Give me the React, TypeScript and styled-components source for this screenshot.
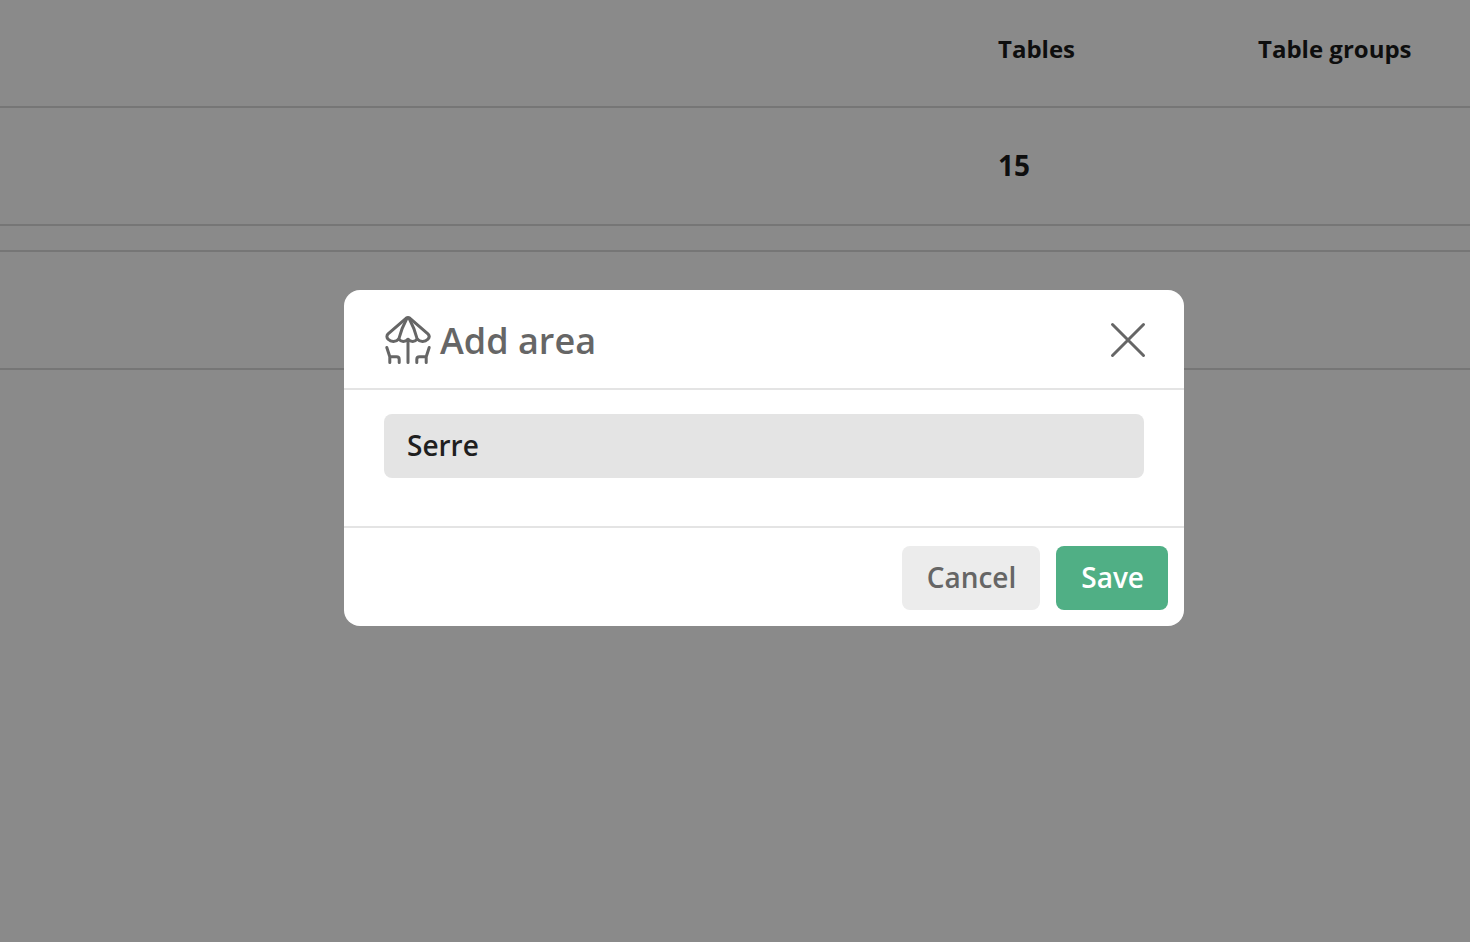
import React, { useState } from "react";
import styled, { createGlobalStyle } from "styled-components";

const GlobalStyle = createGlobalStyle`
  *, *::before, *::after { box-sizing: border-box; }
  body {
    margin: 0;
    background: #fcfcfc;
    color: #1b1b1b;
    font-family: "Open Sans", "Noto Sans", sans-serif;
  }
`;

const Page = styled.main`
  min-height: 100vh;
`;

const AreaTable = styled.table`
  width: 100%;
  table-layout: fixed;
  border-collapse: separate;
  border-spacing: 0;
  text-align: left;
`;

const Column = styled.col<{ $width?: number }>`
  width: ${({ $width }) => ($width ? `${$width}px` : "auto")};
`;

const HeadCell = styled.th`
  height: 106px;
  padding: 0 0 8px;
  font-size: 24px;
  line-height: 32px;
  font-weight: 700;
`;

const Cell = styled.td`
  height: 120px;
  padding: 0 0 2px;
  border-top: 2px solid #d7d7d7;
  border-bottom: 2px solid #d7d7d7;
  font-size: 28px;
  line-height: 40px;
  font-weight: 700;
`;

const SpacerCell = styled.td`
  height: 24px;
  padding: 0;
`;

const Overlay = styled.div`
  position: fixed;
  inset: 0;
  display: flex;
  align-items: center;
  justify-content: center;
  padding: 0 0 26px 58px;
  background: rgba(0, 0, 0, 0.45);
`;

const Dialog = styled.form`
  width: 840px;
  max-width: 100%;
  border-radius: 16px;
  background: #fff;
  color: #666;
`;

const DialogHeader = styled.header`
  display: flex;
  align-items: flex-start;
  gap: 8px;
  padding: 26px 32px 22px 40px;
  border-bottom: 2px solid #e4e4e4;
`;

const Title = styled.h2`
  flex: 1;
  margin: 0;
  font-size: 36px;
  line-height: 50px;
  font-weight: 600;
`;

const CloseButton = styled.button`
  display: flex;
  padding: 0;
  border: 0;
  background: none;
  color: inherit;
  cursor: pointer;
`;

const DialogBody = styled.div`
  padding: 24px 40px 48px;
`;

const NameInput = styled.input`
  display: block;
  width: 100%;
  height: 64px;
  padding: 0 23px 2px;
  border: 0;
  border-radius: 8px;
  outline: 0;
  background: #e4e4e4;
  color: #1f1f1f;
  font-family: inherit;
  font-size: 28px;
  font-weight: 600;
`;

const DialogFooter = styled.footer`
  display: flex;
  justify-content: flex-end;
  gap: 16px;
  padding: 18px 16px 16px;
  border-top: 2px solid #e4e4e4;
`;

const Button = styled.button<{ $primary?: boolean }>`
  height: 64px;
  padding: 0 24px 2px 25px;
  border: 0;
  border-radius: 8px;
  background: ${({ $primary }) => ($primary ? "#50af85" : "#ececec")};
  color: ${({ $primary }) => ($primary ? "#fff" : "#666")};
  font-family: inherit;
  font-size: 28px;
  font-weight: 600;
  cursor: pointer;
`;

const TerraceIcon = () => (
  <svg
    width="48"
    height="48"
    viewBox="0 0 48 48"
    fill="none"
    stroke="currentColor"
    strokeWidth="3"
    strokeLinecap="round"
    strokeLinejoin="round"
    aria-hidden="true"
  >
    <path d="M22 2.300Q24 .8 26 2.300L43.900 17.900C45.500 19.600 45.500 21.700 43.800 23.300C41 26.200 36 26.200 33.200 23C31 26.200 26.800 26.200 24 23.300C21.200 26.200 17 26.200 14.800 23C12 26.200 7 26.200 4.200 23.300C2.500 21.700 2.500 19.600 4.100 17.900Z" />
    <path d="M22.600 3C19.300 9 16.800 15 14.800 23M25.400 3C28.700 9 31.200 15 33.200 23M24 23.300V46.500" />
    <path d="M2.800 31.500L5.800 40.800V46.500M5.800 40.800H12.500Q15.200 40.800 15.200 43.500V46.500" />
    <path d="M45.200 31.500L42.200 40.800V46.500M42.200 40.800H35.500Q32.800 40.800 32.800 43.500V46.500" />
  </svg>
);

const CloseIcon = () => (
  <svg
    width="48"
    height="48"
    viewBox="0 0 48 48"
    fill="none"
    stroke="currentColor"
    strokeWidth="3"
    strokeLinecap="round"
    aria-hidden="true"
  >
    <path d="M8.500 8.500L39.500 39.500M39.500 8.500L8.500 39.500" />
  </svg>
);

export default function App() {
  const [name, setName] = useState("Serre");
  const [open, setOpen] = useState(true);
  const close = () => setOpen(false);

  return (
    <>
      <GlobalStyle />
      <Page>
        <AreaTable>
          <colgroup>
            <Column />
            <Column $width={260} />
            <Column $width={212} />
          </colgroup>
          <thead>
            <tr>
              <HeadCell as="td" />
              <HeadCell scope="col">Tables</HeadCell>
              <HeadCell scope="col">Table groups</HeadCell>
            </tr>
          </thead>
          <tbody>
            <tr>
              <Cell />
              <Cell>15</Cell>
              <Cell />
            </tr>
            <tr>
              <SpacerCell colSpan={3} />
            </tr>
            <tr>
              <Cell colSpan={3} />
            </tr>
          </tbody>
        </AreaTable>
      </Page>
      {open && (
        <Overlay>
          <Dialog
            role="dialog"
            aria-modal="true"
            aria-labelledby="area-title"
            onSubmit={(event) => {
              event.preventDefault();
              close();
            }}
          >
            <DialogHeader>
              <TerraceIcon />
              <Title id="area-title">Add area</Title>
              <CloseButton type="button" aria-label="Close" onClick={close}>
                <CloseIcon />
              </CloseButton>
            </DialogHeader>
            <DialogBody>
              <NameInput
                type="text"
                aria-label="Area name"
                value={name}
                onChange={(event) => setName(event.target.value)}
              />
            </DialogBody>
            <DialogFooter>
              <Button type="button" onClick={close}>
                Cancel
              </Button>
              <Button type="submit" $primary>
                Save
              </Button>
            </DialogFooter>
          </Dialog>
        </Overlay>
      )}
    </>
  );
}
